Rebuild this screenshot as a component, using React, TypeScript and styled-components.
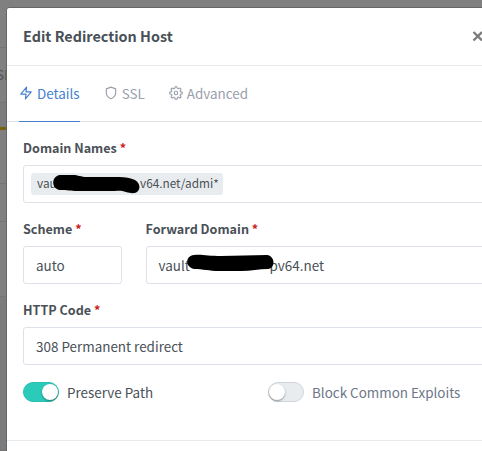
import React from "react";
import styled, { createGlobalStyle } from "styled-components";
import { FiSettings, FiShield, FiZap } from "react-icons/fi";

const GlobalStyle = createGlobalStyle`
  *, *::before, *::after { box-sizing: border-box; }
  body {
    margin: 0;
    overflow: hidden;
    background: #808080;
    color: #495057;
    font: 400 13.45px/22px "Noto Sans CJK SC", "Noto Sans", sans-serif;
  }
`;

const Screen = styled.div`
  position: relative;
  display: flex;
  width: 482px;
  height: 451px;
  overflow: hidden;
  background: #808080;
`;

const Backdrop = styled.div`
  flex: none;
  width: 6px;
  height: 451px;
  overflow: hidden;
`;

const BackdropRow = styled.div<{ $h: number; $line?: string; $bg?: string }>`
  height: ${(p) => p.$h}px;
  padding-top: 17px;
  border-bottom: 1px solid ${(p) => p.$line ?? "#747577"};
  background: ${(p) => p.$bg ?? "#808080"};
  color: #4e535c;
  font-size: 13.4px;
  line-height: 18px;
  white-space: nowrap;
`;

const CutText = styled.span`
  margin-left: -4px;
`;

const Marker = styled.div`
  height: 3px;
  background: #796208;
`;

const Modal = styled.div`
  flex: none;
  width: 500px;
  height: 520px;
  margin-top: 7px;
  border: 1px solid #666;
  border-radius: 3px;
  background: #fff;
`;

const Header = styled.header`
  display: flex;
  align-items: center;
  justify-content: space-between;
  height: 58px;
  padding: 0 20px 2px 16px;
  border-bottom: 1px solid #e9ecef;
`;

const Title = styled.h5`
  margin: 0;
  font-size: 14.4px;
  font-weight: 700;
  line-height: 24px;
`;

const Close = styled.button`
  display: flex;
  padding: 0;
  border: 0;
  background: none;
  color: #7b7b7b;
`;

const Tabs = styled.nav`
  display: flex;
  gap: 24px;
  height: 56px;
  padding: 0 12px;
  border-bottom: 1px solid #dee2e6;
`;

const Tab = styled.a<{ $active?: boolean }>`
  display: flex;
  align-items: center;
  height: 56px;
  padding-bottom: 1px;
  border-bottom: 1px solid ${(p) => (p.$active ? "#467fcf" : "transparent")};
  color: ${(p) => (p.$active ? "#467fcf" : "#9aa0ac")};

  svg {
    flex: none;
    margin-right: 4px;
  }
`;

const Body = styled.div`
  display: flex;
  flex-direction: column;
  gap: 16px;
  height: 319px;
  padding: 16px 16px 0;
  border-bottom: 1px solid #e9ecef;
`;

const FieldRow = styled.div`
  display: grid;
  grid-template-columns: 98.5px 1fr;
  gap: 24px;
`;

const Label = styled.label`
  display: block;
  height: 27px;
  font-size: 12.6px;
  font-weight: 700;
  line-height: 20px;
`;

const Required = styled.span`
  color: #cd201f;
`;

const Control = styled.div<{ $lift?: boolean }>`
  position: relative;
  display: flex;
  align-items: center;
  height: 38px;
  padding: 0 12px ${(p) => (p.$lift ? 1 : 0)}px;
  border: 1px solid #dce1ea;
  border-radius: 3px;
  white-space: nowrap;
`;

const TagControl = styled(Control)`
  padding: 0 7px;
`;

const Tag = styled.span`
  position: relative;
  display: flex;
  width: 192px;
  height: 22px;
  padding: 0 6px;
  border-radius: 3px;
  background: #e9ecef;
  font-size: 11.8px;
  line-height: 20px;
`;

const Lead = styled.span<{ $w: number }>`
  flex: none;
  width: ${(p) => p.$w}px;
`;

const Scribble = styled.svg<{ $x: number; $y: number }>`
  position: absolute;
  left: ${(p) => p.$x}px;
  top: ${(p) => p.$y}px;
  overflow: visible;
`;

const Switches = styled.div`
  display: grid;
  grid-template-columns: 221px 221px;
  gap: 24px;
`;

const Switch = styled.label<{ $on?: boolean }>`
  display: flex;
  align-items: center;
  gap: 8px;
  height: 21px;
  color: ${(p) => (p.$on ? "#495057" : "#6e7687")};
  white-space: nowrap;
`;

const Track = styled.span<{ $on?: boolean }>`
  display: flex;
  flex: none;
  justify-content: ${(p) => (p.$on ? "flex-end" : "flex-start")};
  width: 36px;
  height: 20px;
  padding: 1px 0;
  border: 1px solid ${(p) => (p.$on ? "#28bfae" : "#cfd4db")};
  border-radius: 10px;
  background: ${(p) => (p.$on ? "#2bcbba" : "#e9ecef")};
`;

const Knob = styled.span`
  width: 16px;
  height: 16px;
  border-radius: 50%;
  background: #fff;
  box-shadow: 0 1px 2px rgba(0, 0, 0, 0.4);
`;

const FieldLabel = ({ children }: { children: React.ReactNode }) => (
  <Label>
    {children} <Required>*</Required>
  </Label>
);

export default function App() {
  return (
    <>
      <GlobalStyle />
      <Screen>
        <Backdrop>
          <BackdropRow $h={48} />
          <BackdropRow $h={55}>
            <CutText>SL</CutText>
          </BackdropRow>
          <BackdropRow $h={24} $line="#7b7c7e" $bg="#7b7c7e" />
          <Marker />
          <BackdropRow $h={54} />
          <BackdropRow $h={38} />
          <BackdropRow $h={75} />
          <BackdropRow $h={154} $bg="#7a7b7d" />
        </Backdrop>
        <Modal>
          <Header>
            <Title>Edit Redirection Host</Title>
            <Close aria-label="Close">
              <svg width="13" height="12" viewBox="0 0 13 12">
                <path d="M1.5 2 10 10.5M10 2 1.5 10.5" stroke="currentColor" strokeWidth="2.3" />
              </svg>
            </Close>
          </Header>
          <Tabs>
            <Tab $active>
              <FiZap size={14} />
              Details
            </Tab>
            <Tab>
              <FiShield size={14} />
              SSL
            </Tab>
            <Tab>
              <FiSettings size={14} />
              Advanced
            </Tab>
          </Tabs>
          <Body>
            <div>
              <FieldLabel>Domain Names</FieldLabel>
              <TagControl>
                <Tag>
                  <Lead $w={103}>vaul</Lead>
                  v64.net/admi*
                  <Scribble $x={22} $y={2} width="88" height="20" viewBox="0 0 88 20">
                    <path
                      d="M7 0H20C25 0 28 2 34 2H66C72 2 78 3 82 5C87 8 88 14 84 17C81 19 77 18 73 17C68 15 64 16 58 16H24C18 16 14 15 7 15C-2 14-2 1 7 0Z"
                      fill="#000"
                    />
                  </Scribble>
                </Tag>
              </TagControl>
            </div>
            <FieldRow>
              <div>
                <FieldLabel>Scheme</FieldLabel>
                <Control>auto</Control>
              </div>
              <div>
                <FieldLabel>Forward Domain</FieldLabel>
                <Control $lift>
                  <Lead $w={111}>vault</Lead>
                  pv64.net
                  <Scribble $x={40} $y={7} width="87" height="18" viewBox="0 0 87 18">
                    <path
                      d="M7 1C14 0 22 2 34 2L80 1C88 2 89 14 81 15C72 15 64 17 54 17H32C22 17 16 15 7 15C-2 13-2 2 7 1Z"
                      fill="#000"
                    />
                  </Scribble>
                </Control>
              </div>
            </FieldRow>
            <div>
              <FieldLabel>HTTP Code</FieldLabel>
              <Control>308 Permanent redirect</Control>
            </div>
            <Switches>
              <Switch $on>
                <Track $on>
                  <Knob />
                </Track>
                Preserve Path
              </Switch>
              <Switch>
                <Track>
                  <Knob />
                </Track>
                Block Common Exploits
              </Switch>
            </Switches>
          </Body>
        </Modal>
      </Screen>
    </>
  );
}
